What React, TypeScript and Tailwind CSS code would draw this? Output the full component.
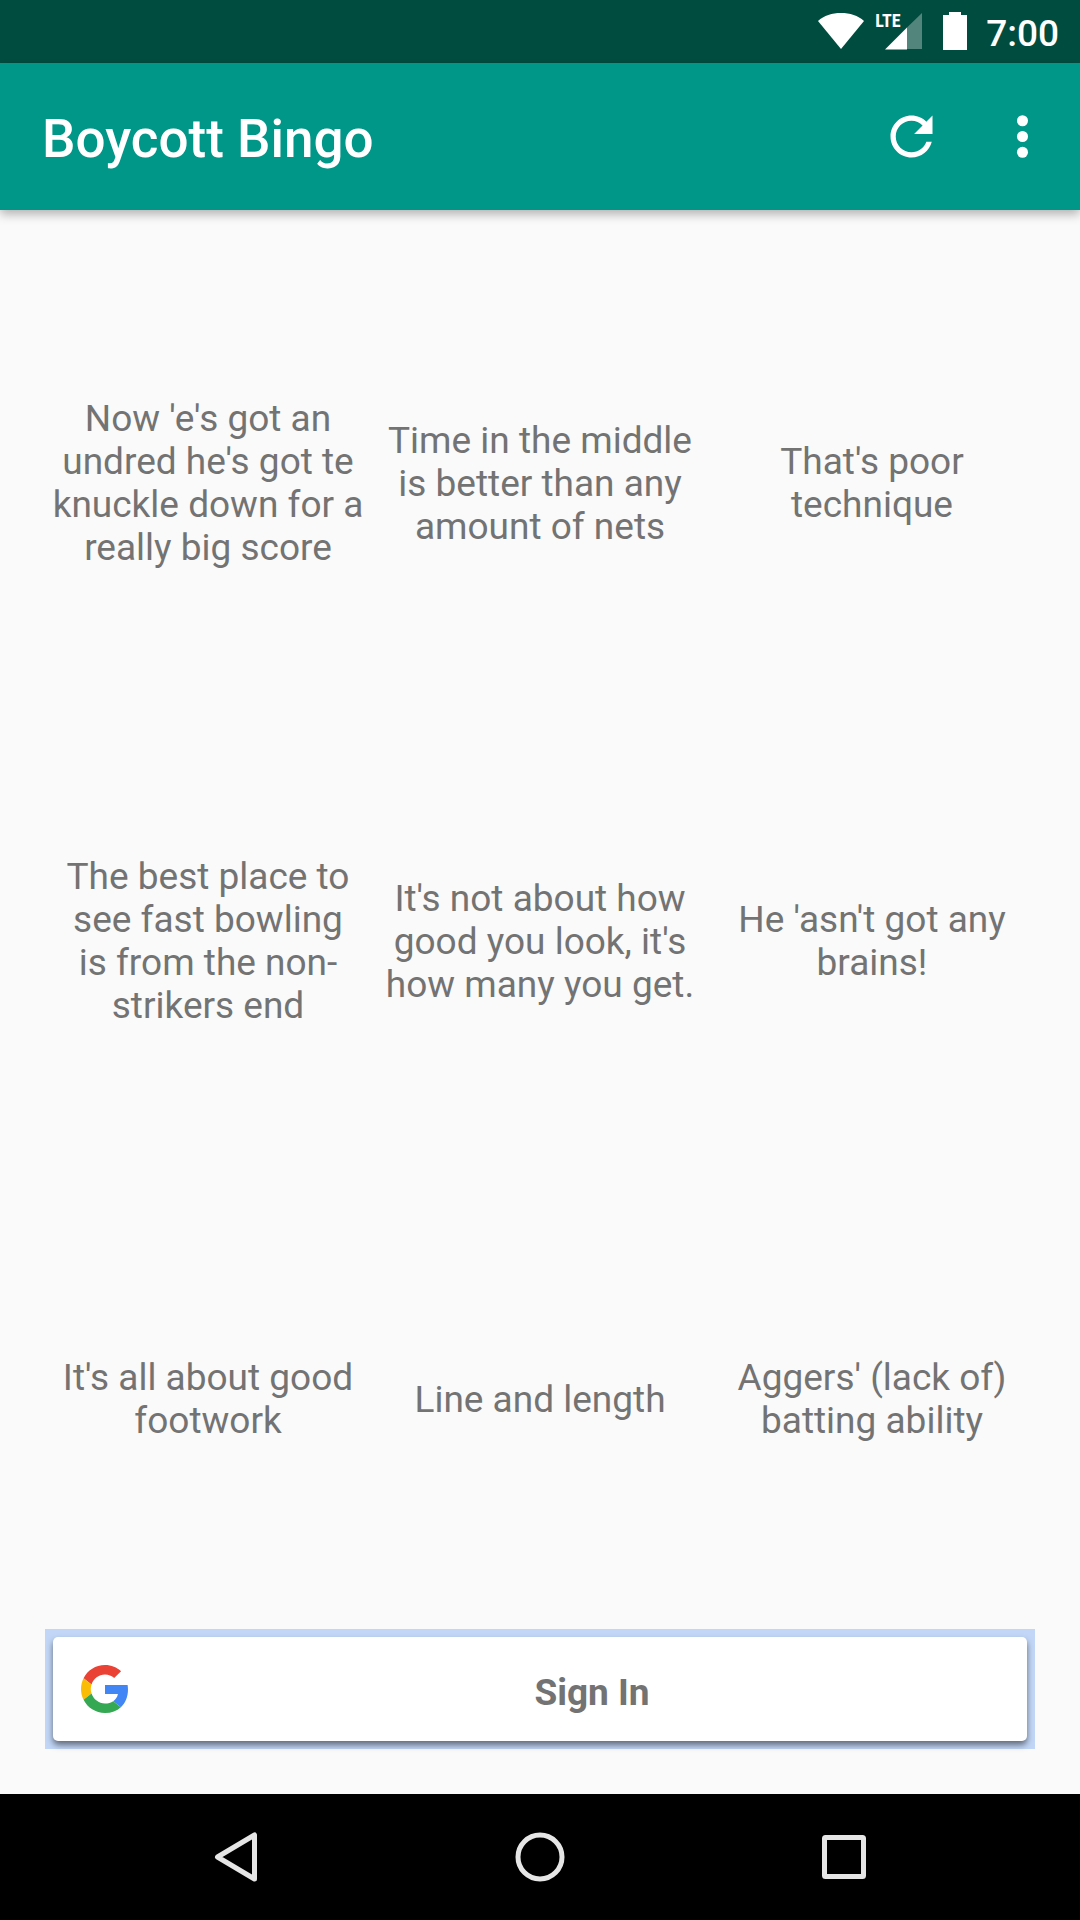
const phrases = [
  "Now 'e's got an undred he's got te knuckle down for a really big score",
  "Time in the middle is better than any amount of nets",
  "That's poor technique",
  "The best place to see fast bowling is\u00a0from the non-strikers end",
  "It's not about how good you look, it's how many you get.",
  "He 'asn't got any brains!",
  "It's all about good footwork",
  "Line and length",
  "Aggers' (lack of) batting ability",
];

function StatusBar() {
  return (
    <div className="flex h-[63px] items-start justify-end bg-[#004d40] pr-[21px] text-white">
      <svg className="mt-3 h-[38px] w-[48px]" viewBox="0 0 48 38" fill="currentColor" aria-label="Wi-Fi">
        <path d="M1 9C7 3.500 15 1 24 1s17 2.500 23 8L24 37z" />
      </svg>
      <div className="relative ml-5 mt-3 h-[38px] w-[37px]">
        <svg className="h-[38px] w-[37px]" viewBox="0 0 37 38" fill="currentColor" aria-label="Mobile signal">
          <path d="M37 1v36H22V15.500z" opacity=".32" />
          <path d="M0 37.500L22 15.500v22z" />
        </svg>
        <span className="absolute -left-[10px] -top-[3px] font-['Roboto_Condensed','Roboto',sans-serif] text-[18px] leading-6 font-bold">
          LTE
        </span>
      </div>
      <svg className="ml-[21px] mt-3 h-[38px] w-[24px]" viewBox="0 0 24 38" fill="currentColor" aria-label="Battery full">
        <path d="M6 0h12v3h6v35H0V3h6z" />
      </svg>
      <span className="ml-[19px] mt-3 text-[37px] leading-[43px] font-medium">7:00</span>
    </div>
  );
}

function Toolbar() {
  return (
    <header className="relative flex h-[147px] items-center bg-[#009688] pl-[42px] pr-[10px] text-white shadow-[0_4px_10px_rgba(0,0,0,0.3)]">
      <h1 className="flex-1 pt-1 text-[53px] leading-[62px] font-medium">Boycott Bingo</h1>
      <button type="button" aria-label="Refresh" className="flex h-[126px] w-[126px] items-center justify-center">
        <svg className="size-[63px]" viewBox="0 0 24 24" fill="currentColor">
          <path d="M17.65 6.35C16.2 4.9 14.21 4 12 4c-4.42 0-7.99 3.58-7.99 8s3.57 8 7.99 8c3.73 0 6.840-2.550 7.730-6h-2.080c-.82 2.330-3.040 4-5.650 4-3.310 0-6-2.690-6-6s2.690-6 6-6c1.660 0 3.140.69 4.220 1.780L13 11h7V4l-2.350 2.350z" />
        </svg>
      </button>
      <button type="button" aria-label="More options" className="flex h-[126px] w-24 items-center justify-center">
        <svg className="size-[63px]" viewBox="0 0 24 24" fill="currentColor">
          <circle cx="12" cy="6" r="2.1" />
          <circle cx="12" cy="12" r="2.1" />
          <circle cx="12" cy="18" r="2.1" />
        </svg>
      </button>
    </header>
  );
}

function GoogleLogo() {
  return (
    <svg className="size-12" viewBox="0 0 48 48" aria-hidden="true">
      <path fill="#EA4335" d="M24 9.500c3.540 0 6.710 1.220 9.210 3.600l6.850-6.850C35.900 2.380 30.470 0 24 0 14.620 0 6.510 5.380 2.560 13.220l7.980 6.190C12.430 13.720 17.740 9.500 24 9.500z" />
      <path fill="#4285F4" d="M46.980 24.550c0-1.570-.15-3.090-.38-4.550H24v9.020h12.940c-.58 2.960-2.260 5.480-4.780 7.180l7.730 6c4.510-4.180 7.090-10.360 7.090-17.650z" />
      <path fill="#FBBC05" d="M10.530 28.590c-.48-1.450-.76-2.990-.76-4.590s.27-3.140.76-4.590l-7.980-6.190C.92 16.460 0 20.120 0 24c0 3.880.92 7.540 2.560 10.780l7.970-6.190z" />
      <path fill="#34A853" d="M24 48c6.480 0 11.930-2.130 15.890-5.810l-7.730-6c-2.150 1.450-4.920 2.300-8.160 2.300-6.260 0-11.570-4.220-13.470-9.910l-7.980 6.190C6.510 42.620 14.620 48 24 48z" />
    </svg>
  );
}

function NavigationBar() {
  return (
    <nav className="grid h-[126px] grid-cols-3 bg-black px-[84px] text-[#e6e6e6]">
      <button type="button" aria-label="Back" className="flex items-center justify-center">
        <svg className="size-[52px]" viewBox="0 0 52 52" fill="none" stroke="currentColor" strokeWidth="5" strokeLinejoin="round">
          <path d="M44.500 4v44L7.500 26z" />
        </svg>
      </button>
      <button type="button" aria-label="Home" className="flex items-center justify-center">
        <svg className="size-[52px]" viewBox="0 0 52 52" fill="none" stroke="currentColor" strokeWidth="5">
          <circle cx="26" cy="26" r="22" />
        </svg>
      </button>
      <button type="button" aria-label="Recent apps" className="flex items-center justify-center">
        <svg className="size-[52px]" viewBox="0 0 52 52" fill="none" stroke="currentColor" strokeWidth="5" strokeLinejoin="round">
          <rect x="6.500" y="6.500" width="39" height="39" rx="1" />
        </svg>
      </button>
    </nav>
  );
}

export default function App() {
  return (
    <div className="flex min-h-screen flex-col bg-[#fafafa] font-['Roboto',sans-serif]">
      <StatusBar />
      <Toolbar />
      <main className="flex flex-1 flex-col px-[42px] pb-[42px] pt-[42px] text-[#737373]">
        <div className="grid flex-1 auto-rows-fr grid-cols-3">
          {phrases.map((phrase) => (
            <button key={phrase} type="button" className="px-2 pt-1 text-center text-[37px] leading-[43px]">
              {phrase}
            </button>
          ))}
        </div>
        <div className="p-[3px]">
          <div className="bg-[#c2d7f7] p-2">
            <button
              type="button"
              className="flex h-[104px] w-full items-center rounded-[5px] bg-white pl-7 text-[37px] leading-[43px] font-bold shadow-[0_4px_6px_rgba(0,0,0,0.5)]"
            >
              <GoogleLogo />
              <span className="flex-1 pl-7 pt-1.5 text-center">Sign In</span>
            </button>
          </div>
        </div>
      </main>
      <NavigationBar />
    </div>
  );
}
